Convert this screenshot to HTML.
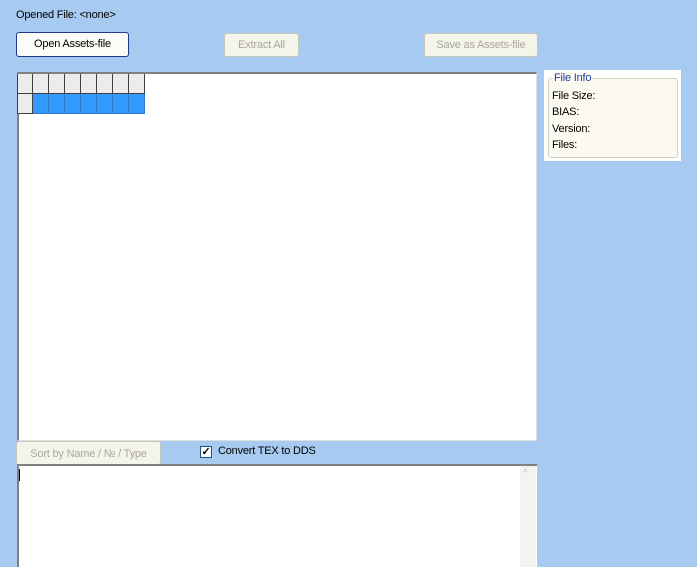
<!DOCTYPE html><html><head><style>
html,body{margin:0;width:697px;height:567px;overflow:hidden}
body{background:#a6caf0;font-family:"Liberation Sans",sans-serif;font-size:11px;position:relative;color:#000;letter-spacing:-0.2px}
.a{position:absolute}
.btn{position:absolute;border:1px solid #c9c7ba;border-radius:3px;background:#f5f4ea;color:#a8a797;text-align:center;box-sizing:border-box;line-height:22px}
.c{position:absolute;width:16px;height:20px;box-sizing:border-box}
</style></head><body>
<div class="a" style="left:16px;top:9px">Opened File: &lt;none&gt;</div>
<div class="btn" style="left:16px;top:32px;width:113px;height:25px;border-color:#1c3b8f;background:#fbfbf8;color:#000">Open Assets-file</div>
<div class="btn" style="left:224px;top:33px;width:75px;height:24px">Extract All</div>
<div class="btn" style="left:424px;top:33px;width:114px;height:24px">Save as Assets-file</div>
<div class="a" style="left:17px;top:72px;width:520px;height:369px;background:#fff;border-top:2px solid #808080;border-left:2px solid #808080;box-sizing:border-box;border-right:1px solid #e0e0e0;border-bottom:1px solid #e0e0e0"></div>
<div class="a" id="g" style="left:17px;top:74px"></div>
<div class="a" style="left:544px;top:70px;width:137px;height:91px;background:#fff"></div>
<div class="a" style="left:548px;top:78px;width:130px;height:80px;border:1px solid #d0d0bf;border-radius:3px;background:#fcfaf0;box-sizing:border-box"></div>
<div class="a" style="left:553px;top:72px;background:#fcfaf0;color:#1f3fa0;padding:0 1px">File Info</div>
<div class="a" style="left:552px;top:88px;line-height:16.3px">File Size:<br>BIAS:<br>Version:<br>Files:</div>
<div class="btn" style="left:16px;top:441px;width:145px;height:24px;line-height:24px">Sort by Name / № / Type</div>
<div class="a" style="left:200px;top:446px;width:12px;height:12px;background:#fff;border:1px solid #1c5180;box-sizing:border-box;font-size:11px;line-height:10px;text-align:center;font-weight:bold">✓</div>
<div class="a" style="left:218px;top:445px">Convert TEX to DDS</div>
<div class="a" style="left:17px;top:464px;width:520px;height:103px;background:#fff;border-top:2px solid #808080;border-left:2px solid #808080;box-sizing:border-box"></div>
<div class="a" style="left:520px;top:466px;width:16px;height:101px;background:#f3f3ef"></div>
<div class="a" style="left:523px;top:468px;color:#c0c0c0;font-size:10px">^</div>
<div class="a" style="left:19px;top:469px;width:1px;height:12px;background:#000"></div>
<script>
var g=document.getElementById('g'),h='';
for(var r=0;r<2;r++)for(var i=0;i<8;i++){
var hdr=r==0||i==0;
h+='<div class="c" style="left:'+(i*16)+'px;top:'+(r*20)+'px;background:'+(hdr?'#ececec':'#3399ff')+';border-right:1px solid '+(hdr?'#404040':'#2a7bd0')+';border-bottom:1px solid '+(hdr?'#404040':'#2a7bd0')+(i==0?';border-left:1px solid #404040':'')+'"></div>';}
g.innerHTML=h;
</script>
</body></html>
